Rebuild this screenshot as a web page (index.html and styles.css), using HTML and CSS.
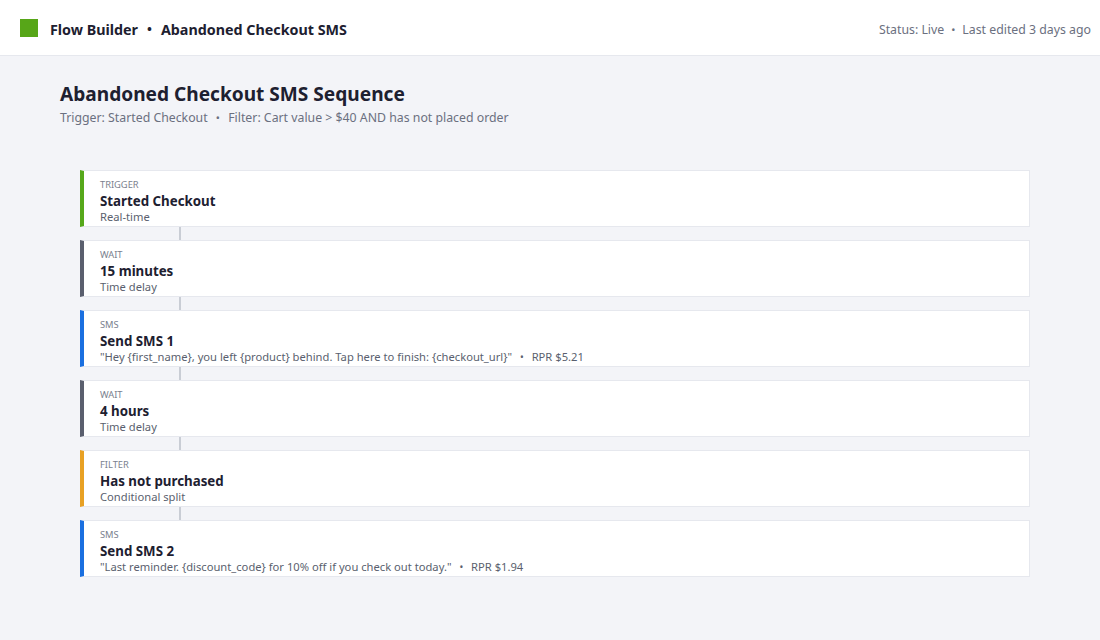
FILE: index.html
```html
<!DOCTYPE html>
<html>
<head>
<meta charset="utf-8">
<link rel="stylesheet" href="styles.css">
</head>
<body>
<header class="topbar">
  <div class="brand">
    <span class="logo"></span>
    <span class="crumb">Flow Builder</span>
    <span class="dot">•</span>
    <span class="crumb">Abandoned Checkout SMS</span>
  </div>
  <div class="meta">
    <span>Status: Live</span>
    <span class="dot">•</span>
    <span>Last edited 3 days ago</span>
  </div>
</header>
<main class="page">
  <h1 class="title">Abandoned Checkout SMS Sequence</h1>
  <p class="subtitle">Trigger: Started Checkout <span class="dot">•</span> Filter: Cart value &gt; $40 AND has not placed order</p>

  <div class="flow">
    <div class="step trigger">
      <div class="kind">TRIGGER</div>
      <div class="name">Started Checkout</div>
      <div class="desc">Real-time</div>
    </div>
    <div class="link"></div>
    <div class="step wait">
      <div class="kind">WAIT</div>
      <div class="name">15 minutes</div>
      <div class="desc">Time delay</div>
    </div>
    <div class="link"></div>
    <div class="step sms">
      <div class="kind">SMS</div>
      <div class="name">Send SMS 1</div>
      <div class="desc">"Hey {first_name}, you left {product} behind. Tap here to finish: {checkout_url}" <span class="dot">•</span> RPR $5.21</div>
    </div>
    <div class="link"></div>
    <div class="step wait">
      <div class="kind">WAIT</div>
      <div class="name">4 hours</div>
      <div class="desc">Time delay</div>
    </div>
    <div class="link"></div>
    <div class="step filter">
      <div class="kind">FILTER</div>
      <div class="name">Has not purchased</div>
      <div class="desc">Conditional split</div>
    </div>
    <div class="link"></div>
    <div class="step sms">
      <div class="kind">SMS</div>
      <div class="name">Send SMS 2</div>
      <div class="desc">"Last reminder. {discount_code} for 10% off if you check out today." <span class="dot">•</span> RPR $1.94</div>
    </div>
  </div>
</main>
</body>
</html>
```

FILE: styles.css
```css
* { box-sizing: border-box; }
html, body { margin: 0; padding: 0; }
body {
  font-family: "Noto Sans", "Open Sans", sans-serif;
  background: #f3f4f8;
  color: #1d2030;
  height: 640px;
}
.topbar {
  height: 56px;
  background: #ffffff;
  border-bottom: 1px solid #e6e8ee;
  display: flex;
  align-items: center;
  justify-content: space-between;
  padding: 3px 9px 0 20px;
}
.brand {
  display: flex;
  align-items: center;
  font-size: 14.3px;
  font-weight: 700;
  color: #1d2030;
}
.logo {
  width: 18px;
  height: 18px;
  background: #57a618;
  margin-right: 12px;
  margin-top: -3px;
}
.brand .dot { margin: 0 9px; font-size: 13px; }
.meta {
  font-size: 12.3px;
  color: #6b7080;
  display: flex;
  align-items: center;
}
.meta .dot { margin: 0 7px; font-size: 11px; }
.page {
  padding: 25px 60px 0 60px;
}
.title {
  margin: 0;
  font-size: 19.1px;
  font-weight: 700;
  line-height: 26px;
  color: #1d2030;
}
.subtitle {
  margin: 2px 0 0 0;
  font-size: 12.3px;
  line-height: 18px;
  color: #6b7080;
}
.subtitle .dot { margin: 0 5px; font-size: 11px; }
.flow {
  margin: 43px 0 0 20px;
  width: 950px;
  display: flex;
  flex-direction: column;
}
.step {
  height: 57px;
  background: #ffffff;
  border: 1px solid #e6e8ee;
  border-left: 4px solid #5a5f6e;
  padding: 8px 0 0 16px;
}
.step.trigger { border-left-color: #56a81a; }
.step.wait { border-left-color: #5a5f6e; }
.step.sms { border-left-color: #1a6fe0; }
.step.filter { border-left-color: #e8a124; }
.kind {
  font-size: 9.3px;
  line-height: 12px;
  color: #7a7f8e;
}
.name {
  font-size: 13.3px;
  font-weight: 700;
  line-height: 18px;
  color: #1d2030;
  margin-top: 1px;
}
.desc {
  font-size: 11.2px;
  line-height: 15px;
  color: #5a5f6e;
  margin-top: -1px;
}
.desc .dot { margin: 0 5px; font-size: 10px; }
.link {
  width: 2px;
  height: 13px;
  background: #c9cdd5;
  margin: 0 0 0 99px;
}
```
